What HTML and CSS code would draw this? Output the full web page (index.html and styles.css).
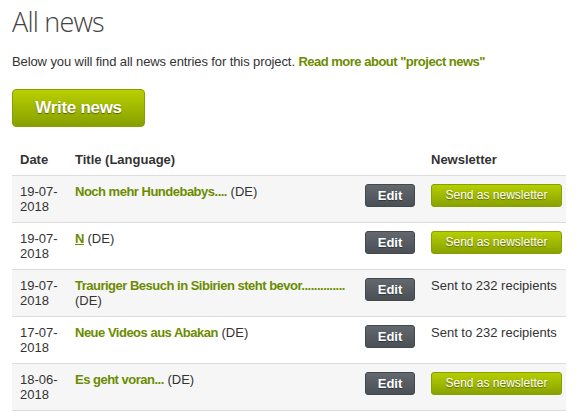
FILE: index.html
```html
<!DOCTYPE html>
<html lang="en">
<head>
    <meta charset="UTF-8">
    <meta name="viewport" content="width=device-width, initial-scale=1.0">
    <title>All news</title>
    <link rel="stylesheet" href="styles.css">
</head>
<body>
    <div class="page">
        <h1 class="page-title">All news</h1>
        <p class="intro">Below you will find all news entries for this project. <a href="#" class="link">Read more about "project news"</a></p>
        <a href="#" class="btn-write">Write news</a>

        <table class="news-table">
            <colgroup>
                <col class="col-date">
                <col class="col-title">
                <col class="col-edit">
                <col class="col-news">
            </colgroup>
            <thead>
                <tr>
                    <th>Date</th>
                    <th>Title (Language)</th>
                    <th></th>
                    <th>Newsletter</th>
                </tr>
            </thead>
            <tbody>
                <tr>
                    <td>19-07-2018</td>
                    <td><a href="#" class="link">Noch mehr Hundebabys....</a> (DE)</td>
                    <td><a href="#" class="btn-edit">Edit</a></td>
                    <td><a href="#" class="btn-send">Send as newsletter</a></td>
                </tr>
                <tr>
                    <td>19-07-2018</td>
                    <td><a href="#" class="link underline">N</a> (DE)</td>
                    <td><a href="#" class="btn-edit">Edit</a></td>
                    <td><a href="#" class="btn-send">Send as newsletter</a></td>
                </tr>
                <tr>
                    <td>19-07-2018</td>
                    <td><a href="#" class="link">Trauriger Besuch in Sibirien steht bevor..............</a> (DE)</td>
                    <td><a href="#" class="btn-edit">Edit</a></td>
                    <td>Sent to 232 recipients</td>
                </tr>
                <tr>
                    <td>17-07-2018</td>
                    <td><a href="#" class="link">Neue Videos aus Abakan</a> (DE)</td>
                    <td><a href="#" class="btn-edit">Edit</a></td>
                    <td>Sent to 232 recipients</td>
                </tr>
                <tr>
                    <td>18-06-2018</td>
                    <td><a href="#" class="link">Es geht voran...</a> (DE)</td>
                    <td><a href="#" class="btn-edit">Edit</a></td>
                    <td><a href="#" class="btn-send">Send as newsletter</a></td>
                </tr>
            </tbody>
        </table>
    </div>
</body>
</html>
```

FILE: styles.css
```css
body {
    margin: 0;
    background: white;
    color: #333;
    font-family: "Liberation Sans", Arial, sans-serif;
    font-size: 13px;
}
.page {
    padding: 0 12px;
}
.page-title {
    margin: 0;
    padding-top: 4px;
    font-family: "Open Sans", sans-serif;
    font-weight: 300;
    font-size: 27px;
    letter-spacing: -0.8px;
    line-height: 36px;
    color: #444;
}
.intro {
    margin: 14px 0 19px;
    line-height: 16px;
    letter-spacing: -0.1px;
}
.link {
    color: #6b8c00;
    font-weight: bold;
    letter-spacing: -0.5px;
    text-decoration: none;
}
.underline {
    text-decoration: underline;
}
.btn-write {
    display: inline-block;
    width: 131px;
    height: 36px;
    line-height: 36px;
    text-align: center;
    color: white;
    font-weight: bold;
    font-size: 17px;
    letter-spacing: -0.3px;
    text-decoration: none;
    text-shadow: 0 1px 1px rgba(0, 0, 0, 0.45);
    background: linear-gradient(#b8d000, #87a000);
    border: 1px solid #86a000;
    border-radius: 4px;
}
.news-table {
    margin-top: 17px;
    width: 554px;
    border-collapse: collapse;
    table-layout: fixed;
}
.col-date { width: 55px; }
.col-title { width: 290px; }
.col-edit { width: 66px; }
.news-table th,
.news-table td {
    text-align: left;
    vertical-align: top;
    padding: 8px;
    line-height: 15px;
    border-bottom: 1px solid #dcdcdc;
}
.news-table th {
    font-weight: bold;
}
.news-table tbody tr:nth-child(odd) {
    background: #f6f6f6;
}
.btn-edit,
.btn-send {
    display: block;
    height: 21px;
    line-height: 21px;
    text-align: center;
    color: white;
    font-size: 12px;
    text-decoration: none;
    text-shadow: 0 1px 1px rgba(0, 0, 0, 0.4);
    border-radius: 3px;
}
.btn-edit {
    width: 48px;
    font-size: 13px;
    font-weight: bold;
    background: linear-gradient(#62686e, #4a5056);
    border: 1px solid #43484d;
}
.btn-send {
    width: 129px;
    background: linear-gradient(#b6ce00, #8aa200);
    border: 1px solid #86a000;
}
```
